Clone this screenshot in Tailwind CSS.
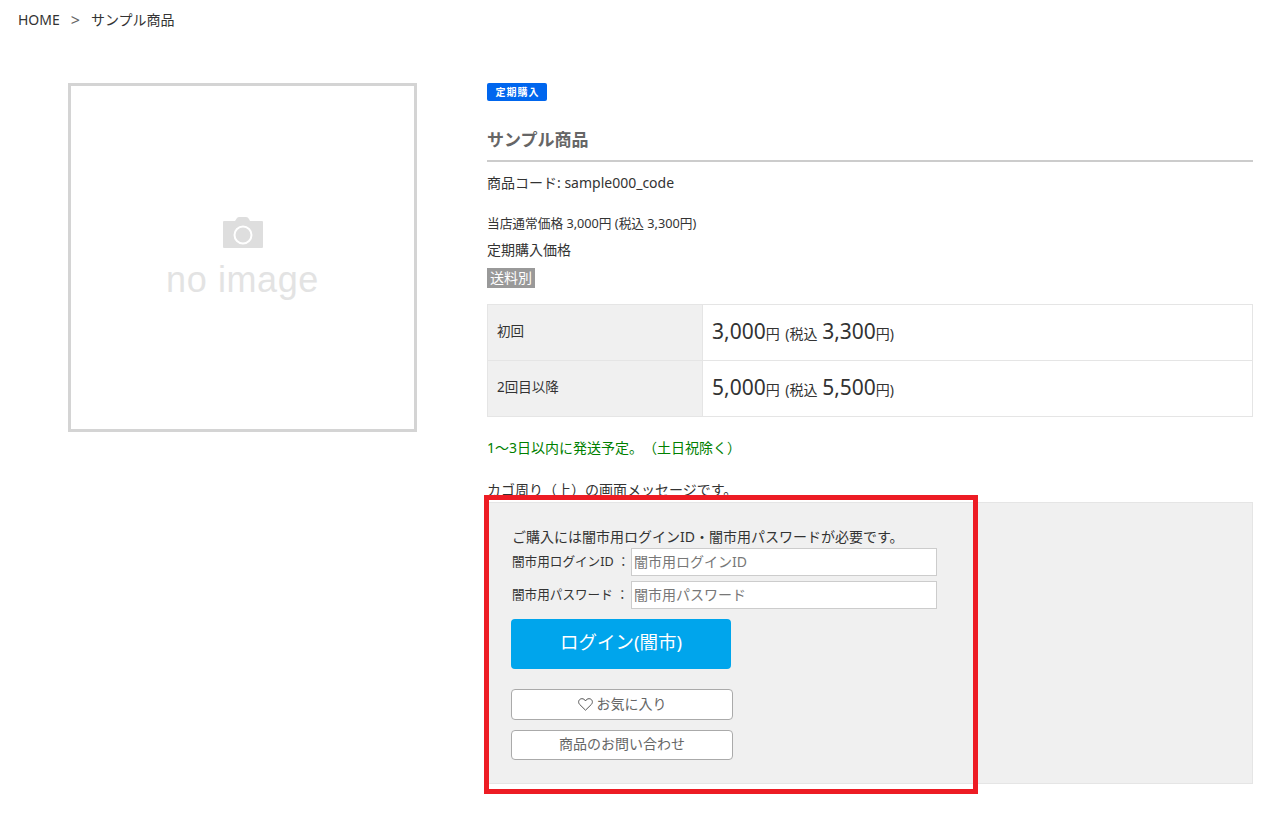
<!DOCTYPE html>
<html lang="ja">
<head>
<meta charset="utf-8">
<script src="https://cdn.jsdelivr.net/npm/@tailwindcss/browser@4"></script>
</head>
<body class="bg-white text-[#333] font-['Noto_Sans','Noto_Sans_CJK_JP',sans-serif] font-normal [text-spacing-trim:space-all]">
<div class="relative h-[823px] w-[1267px] overflow-hidden">
  <nav class="flex h-[40px] items-center pl-[18px] text-[14px] leading-[20px]">
    <span>HOME</span><span class="mx-[11px] text-[16px] text-[#666]">&gt;</span><span>サンプル商品</span>
  </nav>
  <div class="mt-[43px] flex">
    <div class="ml-[68px] flex h-[349px] w-[349px] shrink-0 flex-col items-center border-[3px] border-[#d4d4d4] pt-[131px]">
      <svg class="h-[31px] w-[40px]" viewBox="0 0 40 31" fill="#dedede"><path d="M1 4h11l2-3q1-1 2-1h7q2 0 3 2l1 2h12q1 0 1 1v25q0 1-1 1H1q-1 0-1-1V5q0-1 1-1z"/><circle cx="20" cy="18" r="8.500" fill="none" stroke="#fff" stroke-width="2"/></svg>
      <div class="mt-[10px] font-['Liberation_Sans'] text-[36px] leading-[44px] tracking-[0.6px] text-[#e3e3e3]">no image</div>
    </div>
    <main class="ml-[70px] w-[766px] shrink-0 text-[14px]">
      <span class="flex h-[18px] w-[60px] items-center justify-center rounded-[2px] bg-[#0066ee] pl-[1px] text-[10px] leading-none font-bold tracking-[1px] text-white">定期購入</span>
      <h1 class="mt-[25px] h-[36px] border-b-2 border-[#cccccc] text-[17px] leading-[28px] font-bold text-[#666]">サンプル商品</h1>
      <p class="mt-[11px] text-[14px] leading-[20px]">商品コード: sample000_code</p>
      <p class="mt-[20px] text-[12.700px] leading-[20px]">当店通常価格 3,000円 (税込 3,300円)</p>
      <p class="mt-[7px] text-[14px] leading-[20px]">定期購入価格</p>
      <span class="mt-[8px] inline-block h-[20px] bg-[#999] px-[3px] text-[14px] leading-[20px] text-white">送料別</span>
      <table class="mt-[16px] w-full border-collapse">
        <tbody>
          <tr class="h-[56px]">
            <th class="w-[215px] border border-[#e5e5e5] bg-[#f0f0f0] pb-[2px] pl-[9px] text-left text-[13.500px] font-normal">初回</th>
            <td class="border border-[#e5e5e5] pb-[2px] pl-[9px] text-[14px]"><span class="text-[21px]">3,000</span>円 <span class="ml-[2px]">(税込</span> <span class="ml-[1px] text-[21px]">3,300</span>円)</td>
          </tr>
          <tr class="h-[56px]">
            <th class="border border-[#e5e5e5] bg-[#f0f0f0] pb-[2px] pl-[9px] text-left text-[13.500px] font-normal">2回目以降</th>
            <td class="border border-[#e5e5e5] pb-[2px] pl-[9px] text-[14px]"><span class="text-[21px]">5,000</span>円 <span class="ml-[2px]">(税込</span> <span class="ml-[1px] text-[21px]">5,500</span>円)</td>
          </tr>
        </tbody>
      </table>
      <p class="mt-[21px] text-[14px] leading-[20px] text-[#008000]">1～3日以内に発送予定。（土日祝除く）</p>
      <p class="mt-[22px] text-[14px] leading-[20px]">カゴ周り（上）の画面メッセージです。</p>
      <section class="mt-[2px] h-[282px] border border-[#e5e5e5] bg-[#f0f0f0] pl-[23px] pt-[24px]">
        <p class="pl-[1px] text-[14px] leading-[20px]">ご購入には闇市用ログインID・闇市用パスワードが必要です。</p>
        <div class="mt-[1px] flex items-center">
          <label class="w-[120px] pl-[1px] whitespace-nowrap text-[12.600px]">闇市用ログインID ：</label>
          <input class="h-[28px] w-[306px] border border-[#ccc] bg-white px-[2px] pb-[2px] text-[14px] placeholder:text-[#777]" placeholder="闇市用ログインID">
        </div>
        <div class="mt-[5px] flex items-center">
          <label class="w-[120px] pl-[1px] whitespace-nowrap text-[12.600px]">闇市用パスワード ：</label>
          <input class="h-[28px] w-[306px] border border-[#ccc] bg-white px-[2px] pb-[2px] text-[14px] placeholder:text-[#777]" placeholder="闇市用パスワード">
        </div>
        <button class="mt-[10px] block h-[50px] w-[220px] rounded-[4px] bg-[#00a5ec] pb-[5px] text-[18.500px] text-white">ログイン(闇市)</button>
        <button class="mt-[20px] flex h-[31px] w-[222px] items-center justify-center gap-[4px] rounded-[4px] border border-[#aaa] bg-white pb-[3px] text-[14px] text-[#666]">
          <svg class="mt-[3px] h-[13px] w-[15px]" viewBox="0 0 15 13" fill="none" stroke="#555" stroke-width="1"><path d="M7.500 12.200 1.600 6.400C-.6 3.800 1.200.7 3.900.7c1.600 0 2.800.8 3.600 2.200C8.300 1.500 9.500.7 11.100.7c2.700 0 4.500 3.100 2.300 5.700z"/></svg>お気に入り
        </button>
        <button class="mt-[10px] block h-[30px] w-[222px] rounded-[4px] border border-[#aaa] bg-white pb-[3px] text-[14px] text-[#666]">商品のお問い合わせ</button>
      </section>
    </main>
  </div>
  <div class="absolute left-[484px] top-[495px] h-[299px] w-[494px] border-[5px] border-[#ed1c24]"></div>
</div>
</body>
</html>
